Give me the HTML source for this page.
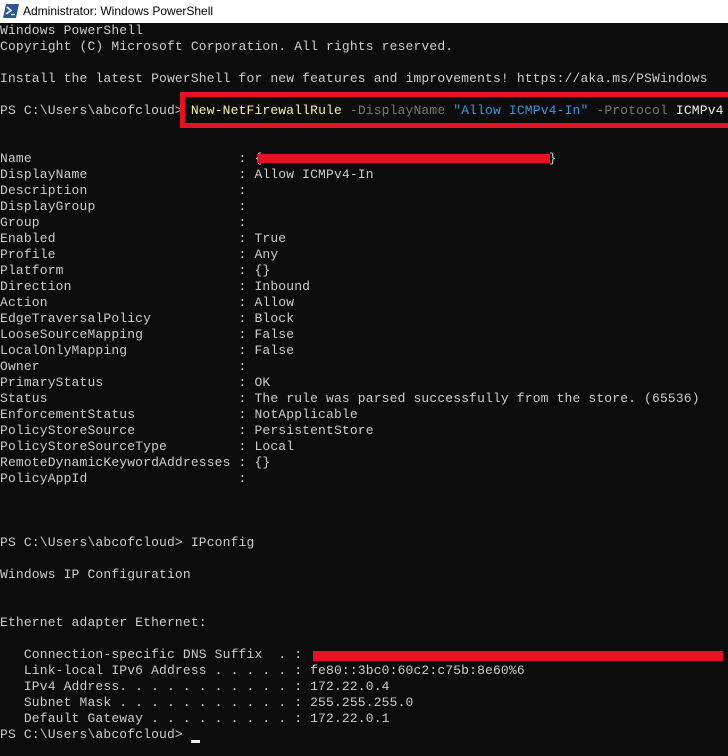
<!DOCTYPE html>
<html><head><style>
html,body{margin:0;width:728px;height:756px;overflow:hidden;background:#0c0c0c}
body{position:relative}
.tb{position:absolute;left:0;top:0;width:728px;height:23px;background:#fff;font:12px "Liberation Sans",sans-serif;color:#000}
.tb span{position:absolute;left:23px;top:4px}
pre{position:absolute;left:0;top:23px;margin:0;font:13px/16px "Liberation Mono",monospace;letter-spacing:0.15px;color:#cccccc;white-space:pre}
.y{color:#f9f1a5}.g{color:#767676}.b{color:#3a96dd}.w{color:#f2f2f2}
.r{position:absolute;background:#e81123}
.box{position:absolute;left:180px;top:92px;width:560px;height:26px;border:5px solid #e81123}
.cur{position:absolute;left:191px;top:740px;width:9px;height:3px;background:#f2f2f2}
</style></head><body>
<div class="tb"><svg style="position:absolute;left:3px;top:4px" width="16" height="14" viewBox="0 0 16 14"><path d="M3 0H16L13 14H0Z" fill="#2b5797"/><path d="M4 3L8 6.5L3 10" stroke="#fff" stroke-width="1.5" fill="none"/><path d="M8 10.5H12" stroke="#fff" stroke-width="1.3"/></svg><span>Administrator: Windows PowerShell</span></div>
<pre>Windows PowerShell
Copyright (C) Microsoft Corporation. All rights reserved.

Install the latest PowerShell for new features and improvements! https://aka.ms/PSWindows

PS C:\Users\abcofcloud&gt; <span class="y">New-NetFirewallRule</span> <span class="g">-DisplayName</span> <span class="b">"Allow ICMPv4-In"</span> <span class="g">-Protocol</span> <span class="w">ICMPv4</span>


Name                          : {                                    }
DisplayName                   : Allow ICMPv4-In
Description                   :
DisplayGroup                  :
Group                         :
Enabled                       : True
Profile                       : Any
Platform                      : {}
Direction                     : Inbound
Action                        : Allow
EdgeTraversalPolicy           : Block
LooseSourceMapping            : False
LocalOnlyMapping              : False
Owner                         :
PrimaryStatus                 : OK
Status                        : The rule was parsed successfully from the store. (65536)
EnforcementStatus             : NotApplicable
PolicyStoreSource             : PersistentStore
PolicyStoreSourceType         : Local
RemoteDynamicKeywordAddresses : {}
PolicyAppId                   :



PS C:\Users\abcofcloud&gt; IPconfig

Windows IP Configuration


Ethernet adapter Ethernet:

   Connection-specific DNS Suffix  . :
   Link-local IPv6 Address . . . . . : fe80::3bc0:60c2:c75b:8e60%6
   IPv4 Address. . . . . . . . . . . : 172.22.0.4
   Subnet Mask . . . . . . . . . . . : 255.255.255.0
   Default Gateway . . . . . . . . . : 172.22.0.1
PS C:\Users\abcofcloud&gt; </pre>
<div class="box"></div>
<div class="r" style="left:258px;top:154px;width:292px;height:9px"></div>
<div class="r" style="left:313px;top:651px;width:410px;height:10px"></div>
<div class="cur"></div>
</body></html>
